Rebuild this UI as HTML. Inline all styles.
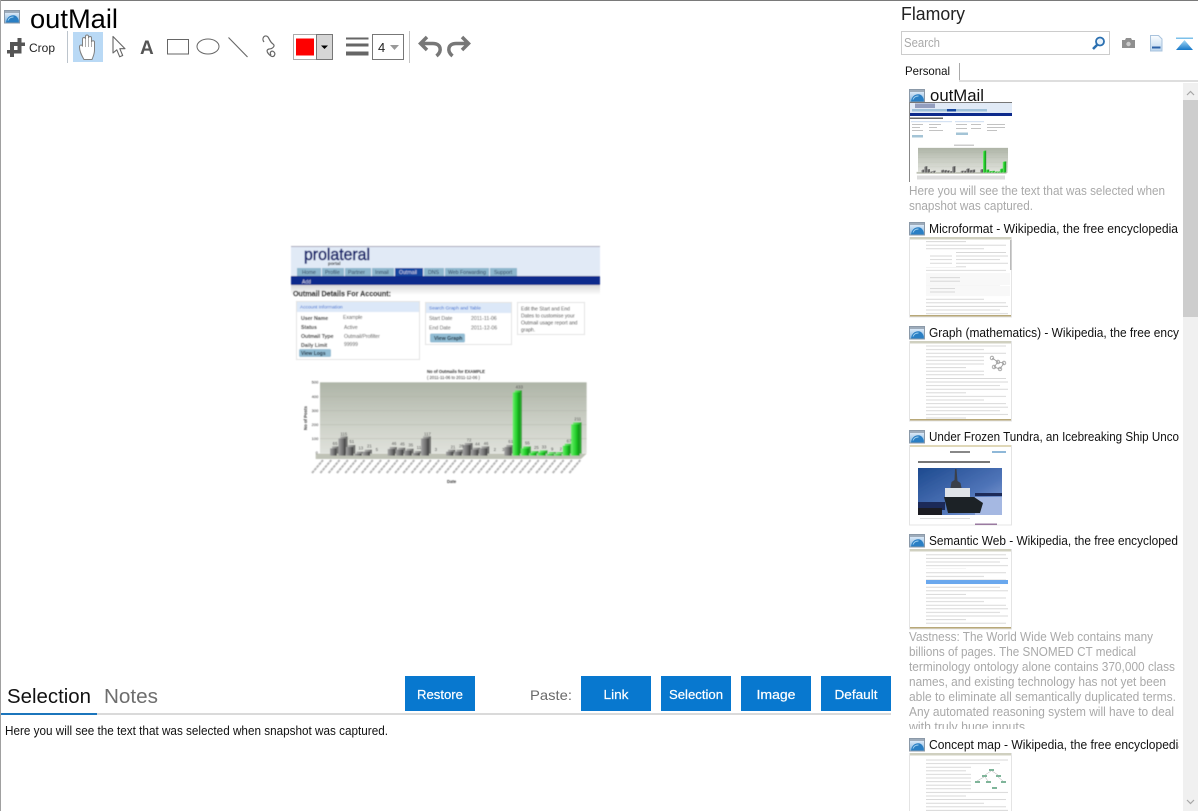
<!DOCTYPE html>
<html><head><meta charset="utf-8"><title>outMail - Flamory</title>
<style>html,body{margin:0;padding:0;background:#fff;width:1198px;height:811px;overflow:hidden}svg{display:block}
text{font-family:"Liberation Sans",sans-serif}</style></head><body>
<svg xmlns="http://www.w3.org/2000/svg" width="1198" height="811" viewBox="0 0 1198 811">
<defs>
<linearGradient id="fav" x1="0" y1="0" x2="0" y2="1"><stop offset="0" stop-color="#dbe9f7"/><stop offset="1" stop-color="#7fb3de"/></linearGradient>
<linearGradient id="plot" x1="0" y1="0" x2="0" y2="1"><stop offset="0" stop-color="#aeb4a7"/><stop offset=".5" stop-color="#c9cdc3"/><stop offset="1" stop-color="#e0e2dc"/></linearGradient>
<linearGradient id="gbar" x1="0" y1="0" x2="1" y2="0"><stop offset="0" stop-color="#a5a5a5"/><stop offset=".6" stop-color="#707070"/><stop offset="1" stop-color="#3c3c3c"/></linearGradient>
<linearGradient id="grn" x1="0" y1="0" x2="1" y2="0"><stop offset="0" stop-color="#6cf06c"/><stop offset=".6" stop-color="#1fcc27"/><stop offset="1" stop-color="#0c8a14"/></linearGradient>
<linearGradient id="shade" x1="0" y1="0" x2="0" y2="1"><stop offset="0" stop-color="#d8d8d8"/><stop offset="1" stop-color="#fff"/></linearGradient>
<linearGradient id="sky" x1="0" y1="0" x2="1" y2="1"><stop offset="0" stop-color="#1d4a8f"/><stop offset=".6" stop-color="#4f74b8"/><stop offset="1" stop-color="#8fa8da"/></linearGradient>
<linearGradient id="pg" x1="0" y1="0" x2="0" y2="1"><stop offset="0" stop-color="#fbfdff"/><stop offset="1" stop-color="#bcd6ee"/></linearGradient>
<linearGradient id="tri" x1="0" y1="0" x2="0" y2="1"><stop offset="0" stop-color="#a8dcf8"/><stop offset="1" stop-color="#1476c8"/></linearGradient>
<filter id="b1" x="-5%" y="-5%" width="110%" height="110%"><feGaussianBlur stdDeviation=".4"/></filter>
<filter id="b2" x="-5%" y="-5%" width="110%" height="110%"><feGaussianBlur stdDeviation=".35"/></filter>
<pattern id="ln" width="84" height="25.2" patternUnits="userSpaceOnUse" patternTransform="translate(926,0)">
<g fill="#cfcfcf"><rect y="0" width="80" height=".8"/><rect y="3.6" width="82" height=".8"/><rect y="7.2" width="74" height=".8"/><rect y="10.800" width="82" height=".8"/><rect y="14.400" width="40" height=".8"/><rect y="18" width="80" height=".8"/><rect y="21.600" width="58" height=".8"/></g>
</pattern>
<clipPath id="cl"><rect x="905" y="84" width="274" height="727"/></clipPath>
<clipPath id="cd"><rect x="905" y="630" width="274" height="99"/></clipPath>
<symbol id="f" viewBox="0 0 16 14" overflow="visible">
<rect x=".5" y=".5" width="15" height="12.500" fill="#e9eff6" stroke="#8b99a8"/>
<rect x="1" y="1" width="14" height="2" fill="#9eacbb"/>
<rect x="1" y="3" width="14" height="9.500" fill="url(#fav)"/>
<path d="M2 12.500C2.500 7.500 6 5 9.500 5.200c3 .2 4.600 2.600 5.300 5.300v2z" fill="#2a7fc4"/>
<path d="M4 10.500c1-2.500 3-3.600 5.500-3.500" fill="none" stroke="#9fd0f0" stroke-width="1"/>
</symbol>
<g id="gb" fill="url(#gbar)">
<rect x="135" y="250" width="20" height="22"/><rect x="160" y="220" width="22" height="52"/><rect x="183" y="246" width="22" height="26"/>
<rect x="208" y="266" width="22" height="6"/><rect x="233" y="260" width="22" height="12"/>
<rect x="308" y="252" width="22" height="20"/><rect x="333" y="254" width="22" height="18"/><rect x="358" y="257" width="22" height="15"/><rect x="383" y="264" width="22" height="8"/><rect x="408" y="220" width="24" height="52"/>
<rect x="483" y="260" width="22" height="12"/><rect x="508" y="260" width="22" height="12"/><rect x="533" y="240" width="24" height="32"/><rect x="558" y="254" width="22" height="18"/><rect x="583" y="250" width="24" height="22"/>
<rect x="658" y="246" width="22" height="26"/>
</g>
<g id="gg" fill="url(#grn)">
<rect x="683" y="82" width="22" height="190"/><rect x="708" y="250" width="24" height="22"/><rect x="733" y="264" width="22" height="8"/><rect x="758" y="262" width="24" height="10"/><rect x="785" y="267" width="22" height="5"/><rect x="808" y="267" width="22" height="5"/><rect x="833" y="242" width="22" height="30"/><rect x="858" y="178" width="26" height="94"/>
</g>
<g id="bars">
<rect x="105" y="52" width="800" height="213" fill="url(#plot)"/>
<path d="M92 266H905L888 282H92Z" fill="#bfc2b6"/>
<path d="M105 95H905M105 137H905M105 179H905M105 221H905" stroke="#a9ae9f" stroke-width="1"/>
<use href="#gb" transform="translate(6,-6)" opacity=".75"/>
<use href="#gg" transform="translate(6,-6)" opacity=".85"/>
<use href="#gb"/><use href="#gg"/>
</g>
</defs>

<rect width="1198" height="811" fill="#fff"/>
<rect x="0" y="0" width="1198" height="1" fill="#7a7a7a"/>
<rect x="0" y="0" width="1" height="811" fill="#a0a0a0"/>

<!-- title -->
<use href="#f" x="4" y="10" width="16" height="14"/>
<text x="30" y="28" font-size="27" fill="#000" textLength="88" lengthAdjust="spacingAndGlyphs">outMail</text>

<!-- toolbar -->
<path d="M17.500 38h4v4.500h3.500v3.500h-3.500v7.500h-7.500v3.500h-4v-3.500H7v-3.500h3V42h7.500zM14 46v4h3.500v-4z" fill="#555" fill-rule="evenodd"/>
<text x="29" y="52" font-size="12" fill="#222" textLength="26" lengthAdjust="spacingAndGlyphs">Crop</text>
<rect x="67" y="31" width="1" height="32" fill="#bcc4cc"/>
<rect x="73" y="32" width="30" height="30" fill="#b9d9f5"/>
<path d="M84 59.500C82 56 79.500 52 79.500 47C79.500 44.500 82 44.500 82.500 46.500V39C82.500 37 85.500 37 85.500 39V36.500C85.500 34.500 88.500 34.500 88.500 36.500V38C88.500 36 91.500 36 91.500 38V42C91.500 40.300 94.500 40.300 94.500 42V50C94.500 54 93 57 92 59.500Z" fill="#fff" stroke="#808080" stroke-width="1"/>
<path d="M85.500 39v8M88.500 38v9M91.500 42v5" stroke="#999" stroke-width=".8" fill="none"/>
<path d="M113 36.500V53l3.800-3.200 2.900 7 3-1.300-2.900-6.800h5.200z" fill="#fff" stroke="#666" stroke-width="1.100" stroke-linejoin="round"/>
<text x="140" y="54" font-size="19" font-weight="700" fill="#555">A</text>
<rect x="167.500" y="39.500" width="21" height="14.500" fill="#fff" stroke="#666"/>
<ellipse cx="208" cy="46.500" rx="11" ry="7.500" fill="#fff" stroke="#666"/>
<path d="M228.500 37.500L247.500 57" stroke="#666" stroke-width="1.100"/>
<path d="M264 42C261 38 265 34 268 37C270 40 270 42 273 44C276 46 272 49 269 49C265 50 268 54 271 56C274 58 276 54 274 52C272 50 269 52 271 55" fill="none" stroke="#666" stroke-width="1.200"/>

<rect x="293.500" y="34.500" width="23" height="25" fill="#fff" stroke="#aaa"/>
<rect x="296" y="38.500" width="18" height="17" fill="#fe0000"/>
<rect x="316.500" y="34.500" width="16" height="25" fill="#d6d6d6" stroke="#777"/>
<path d="M321 45.500h7l-3.500 3.500z" fill="#000"/>
<rect x="346" y="37.500" width="22.500" height="2" fill="#666"/>
<rect x="346" y="43.500" width="22.500" height="3" fill="#666"/>
<rect x="346" y="51.500" width="22.500" height="4" fill="#666"/>
<rect x="372.500" y="34.500" width="31" height="25" fill="#fff" stroke="#777"/>
<text x="378" y="52" font-size="13" fill="#222">4</text>
<path d="M390 45h9l-4.500 5z" fill="#999"/>
<rect x="409" y="31" width="1" height="32" fill="#c4c4c4"/>
<path d="M427 37L420.500 43.500 427 50M421.500 43.500H433C441 43.500 442.500 51 436.500 56" fill="none" stroke="#777" stroke-width="3.500"/>
<path d="M462 37L468.500 43.500 462 50M467.500 43.500H456C448 43.500 446.500 51 452.500 56" fill="none" stroke="#777" stroke-width="3.500"/>

<!-- captured page -->
<g filter="url(#b1)">
<rect x="291" y="246" width="309" height="30" fill="#e1eaf6"/>
<rect x="291" y="246" width="309" height="1" fill="#aab"/>
<text x="304" y="260" font-size="17" fill="#14246e" textLength="66" lengthAdjust="spacingAndGlyphs" stroke="#14246e" stroke-width=".6">prolateral</text>
<text x="328" y="265" font-size="4.500" font-weight="700" fill="#222">portal</text>
<g fill="#8db6cc">
<rect x="297" y="268" width="24" height="8"/><rect x="322" y="268" width="22" height="8"/><rect x="345" y="268" width="26" height="8"/><rect x="372" y="268" width="22" height="8"/><rect x="424" y="268" width="20" height="8"/><rect x="445" y="268" width="44" height="8"/><rect x="490" y="268" width="27" height="8"/>
</g>
<rect x="395" y="268" width="28" height="8" fill="#1846a0"/>
<g font-size="5.200" fill="#1e3350">
<text x="302" y="274">Home</text><text x="325" y="274">Profile</text><text x="348" y="274">Partner</text><text x="375" y="274">Inmail</text><text x="428" y="274">DNS</text><text x="448" y="274">Web Forwarding</text><text x="494" y="274">Support</text>
</g>
<text x="399" y="274" font-size="5.200" fill="#dde">Outmail</text>
<rect x="291" y="276" width="309" height="9" fill="#0a2a8c"/>
<text x="302" y="283.500" font-size="5" fill="#dde">Add</text>
<rect x="291" y="285" width="309" height="10" fill="url(#shade)"/>
<text x="293" y="296" font-size="7.700" font-weight="700" fill="#111" stroke="#111" stroke-width=".2" textLength="98" lengthAdjust="spacingAndGlyphs">Outmail Details For Account:</text>
<rect x="296.500" y="301.500" width="123" height="58" fill="#fff" stroke="#e3e3e3"/>
<rect x="297" y="302" width="122" height="10" fill="#dce8f8"/>
<text x="300" y="308.500" font-size="4.800" fill="#36c">Account Information</text>
<g font-size="5.200" font-weight="700" fill="#111"><text x="301" y="320">User Name</text><text x="301" y="329">Status</text><text x="301" y="338">Outmail Type</text><text x="301" y="347">Daily Limit</text></g>
<g font-size="5" fill="#444"><text x="343" y="319">Example</text><text x="344" y="329">Active</text><text x="344" y="338">Outmail/Profilter</text><text x="344" y="346">99999</text></g>
<rect x="299" y="349" width="32" height="8" rx="1.500" fill="#92bdd4"/>
<text x="301" y="355" font-size="5" font-weight="700" fill="#123">View Logs</text>
<rect x="425.500" y="302.500" width="86" height="42" fill="#fff" stroke="#e3e3e3"/>
<rect x="426" y="303" width="85" height="10" fill="#dce8f8"/>
<text x="429" y="309.500" font-size="4.800" fill="#36c">Search Graph and Table</text>
<g font-size="5.200" fill="#444"><text x="429" y="320">Start Date</text><text x="429" y="329.500">End Date</text><text x="471" y="320">2011-11-06</text><text x="471" y="329.500">2011-12-06</text></g>
<rect x="430" y="333.500" width="35" height="9" rx="1.500" fill="#92bdd4"/>
<text x="434" y="340" font-size="5.200" font-weight="700" fill="#123">View Graph</text>
<rect x="517.500" y="302.500" width="67" height="32" fill="#fff" stroke="#e3e3e3"/>
<g font-size="5" fill="#333"><text x="521" y="310.500">Edit the Start and End</text><text x="521" y="317.500">Dates to customise your</text><text x="521" y="324.500">Outmail usage report and</text><text x="521" y="331.500">graph.</text></g>
<text x="427" y="373" font-size="4.200" font-weight="700" fill="#333">No of Outmails for EXAMPLE</text>
<text x="427" y="379" font-size="4.200" fill="#333">( 2011-11-06 to 2011-12-06 )</text>
<use href="#bars" transform="translate(285,365) scale(.3333)"/>
<g transform="translate(285,365) scale(.3333)" font-size="13" fill="#444">
<text x="143" y="240">65</text><text x="166" y="212">115</text><text x="193" y="234">51</text><text x="220" y="254">13</text><text x="246" y="248">21</text><text x="272" y="258">5</text><text x="320" y="240">46</text><text x="345" y="242">45</text><text x="370" y="245">35</text><text x="395" y="252">11</text><text x="417" y="212">117</text><text x="449" y="258">3</text><text x="497" y="250">21</text><text x="522" y="248">26</text><text x="545" y="230">72</text><text x="570" y="242">44</text><text x="596" y="240">46</text><text x="626" y="258">2</text><text x="651" y="258">3</text><text x="670" y="234">61</text><text x="692" y="70">433</text><text x="720" y="238">55</text><text x="747" y="252">25</text><text x="770" y="250">33</text><text x="798" y="256">9</text><text x="824" y="256">2</text><text x="845" y="232">67</text><text x="868" y="166">211</text>
<g fill="#333" font-size="12"><text x="80" y="56">500</text><text x="80" y="99">400</text><text x="80" y="141">300</text><text x="80" y="183">200</text><text x="80" y="225">100</text><text x="92" y="267">0</text></g>
</g>
<text x="307" y="430" font-size="4.300" font-weight="700" fill="#333" transform="rotate(-90 307 430)">No of Posts</text>
<g stroke="#b5b5b5" stroke-width="2" stroke-dasharray="3 .6" fill="none">
<path d="M312 473l11-13M320.300 473l11-13M328.600 473l11-13M336.900 473l11-13M345.200 473l11-13M353.500 473l11-13M361.800 473l11-13M370.100 473l11-13M378.400 473l11-13M386.700 473l11-13M395 473l11-13M403.300 473l11-13M411.600 473l11-13M419.900 473l11-13M428.200 473l11-13M436.500 473l11-13M444.800 473l11-13M453.100 473l11-13M461.400 473l11-13M469.700 473l11-13M478 473l11-13M486.300 473l11-13M494.600 473l11-13M502.900 473l11-13M511.200 473l11-13M519.500 473l11-13M527.800 473l11-13M536.100 473l11-13M544.400 473l11-13M552.700 473l11-13M561 473l11-13M569.300 473l11-13"/>
</g>
<text x="447" y="483" font-size="4.200" font-weight="700" fill="#333">Date</text>
</g>

<!-- bottom pane -->
<text x="7" y="703" font-size="20" fill="#111" textLength="84" lengthAdjust="spacingAndGlyphs">Selection</text>
<text x="104" y="703" font-size="20" fill="#6e6e6e" textLength="54" lengthAdjust="spacingAndGlyphs">Notes</text>
<rect x="1" y="713" width="890" height="2" fill="#dadada"/>
<rect x="1" y="713" width="96" height="2" fill="#1b75bc"/>
<g fill="#0878cf">
<rect x="405" y="676" width="70" height="35"/><rect x="581" y="676" width="70" height="35"/><rect x="661" y="676" width="70" height="35"/><rect x="741" y="676" width="70" height="35"/><rect x="821" y="676" width="70" height="35"/>
</g>
<text x="530" y="700" font-size="14" fill="#6a6a6a" textLength="42" lengthAdjust="spacingAndGlyphs">Paste:</text>
<g font-size="13" fill="#fff" stroke="#fff" stroke-width=".2" text-anchor="middle">
<text x="440" y="699" textLength="46" lengthAdjust="spacingAndGlyphs">Restore</text>
<text x="616" y="699" textLength="25" lengthAdjust="spacingAndGlyphs">Link</text>
<text x="696" y="699" textLength="54" lengthAdjust="spacingAndGlyphs">Selection</text>
<text x="776" y="699" textLength="39" lengthAdjust="spacingAndGlyphs">Image</text>
<text x="856" y="699" textLength="43" lengthAdjust="spacingAndGlyphs">Default</text>
</g>
<text x="5" y="735" font-size="12.500" fill="#111" textLength="383" lengthAdjust="spacingAndGlyphs">Here you will see the text that was selected when snapshot was captured.</text>

<!-- right panel header -->
<text x="901" y="20" font-size="18" fill="#222" textLength="64" lengthAdjust="spacingAndGlyphs">Flamory</text>
<rect x="901.500" y="31.500" width="208" height="23" fill="#fff" stroke="#ccc"/>
<text x="904" y="47" font-size="12.500" fill="#aaa" textLength="36" lengthAdjust="spacingAndGlyphs">Search</text>
<circle cx="1100" cy="41.500" r="4" fill="#e8f2fb" stroke="#2a6fb0" stroke-width="1.800"/>
<path d="M1097 45L1093 49" stroke="#2a6fb0" stroke-width="2.600"/>
<path d="M1122 40h3l1-2h5l1 2h3v8h-13z" fill="#8f8f8f"/><circle cx="1128.500" cy="44" r="2.200" fill="#ccc"/>
<path d="M1150.500 35.500h8l3.500 3.500v12h-11.500z" fill="url(#pg)" stroke="#a9c3dd"/><rect x="1152" y="46.500" width="8.500" height="2" fill="#2d62a8"/>
<rect x="1176" y="37.500" width="17" height="1.500" fill="#7cc0ea"/>
<path d="M1184.500 40L1176 50h17z" fill="url(#tri)"/>

<rect x="959" y="63" width="1" height="18" fill="#aaa"/>
<text x="905" y="75" font-size="12" fill="#111" textLength="45" lengthAdjust="spacingAndGlyphs">Personal</text>
<rect x="959" y="80" width="239" height="2" fill="#dedede"/>

<!-- scrollbar -->
<rect x="1183" y="83" width="15" height="728" fill="#f0f0f0"/>
<rect x="1183" y="100" width="15" height="217" fill="#cdcdcd"/>
<path d="M1187 95l3.500-3.500 3.500 3.500" fill="none" stroke="#a6a6a6" stroke-width="1.200"/>
<path d="M1187 800l3.500 3.500 3.500-3.500" fill="none" stroke="#a6a6a6" stroke-width="1.200"/>

<!-- list -->
<g clip-path="url(#cl)">
<use href="#f" x="909" y="89" width="16" height="14"/>
<text x="930" y="101" font-size="16.500" fill="#111" textLength="54" lengthAdjust="spacingAndGlyphs">outMail</text>
<!-- thumb 1 -->
<g filter="url(#b2)">
<rect x="909" y="102" width="103" height="80" fill="#fff"/>
<rect x="909" y="102" width="103" height="1" fill="#777"/><rect x="909" y="102" width="1" height="80" fill="#888"/>
<rect x="910" y="103" width="102" height="10" fill="#e1eaf6"/>
<rect x="915" y="103.500" width="20" height="4.500" fill="#7f8bb0" opacity=".8"/>
<rect x="912" y="109" width="75" height="2.500" fill="#9fc0d8"/><rect x="947" y="109" width="9" height="2.500" fill="#1846a0"/>
<rect x="910" y="113" width="102" height="3" fill="#0a2a8c"/>
<rect x="910" y="117.500" width="33" height="1.500" fill="#666"/>
<rect x="911" y="121" width="41" height="1.200" fill="#d5e2f3"/><rect x="955" y="121" width="29" height="1.200" fill="#d5e2f3"/>
<g fill="#bbb"><rect x="912" y="124" width="11" height=".9"/><rect x="912" y="127" width="8" height=".9"/><rect x="912" y="130" width="11" height=".9"/><rect x="929" y="124" width="12" height=".9"/><rect x="929" y="127" width="8" height=".9"/><rect x="929" y="130" width="14" height=".9"/><rect x="956" y="124" width="11" height=".9"/><rect x="971" y="124" width="10" height=".9"/><rect x="956" y="128" width="11" height=".9"/><rect x="971" y="128" width="10" height=".9"/><rect x="987" y="124" width="18" height=".9"/><rect x="987" y="127" width="18" height=".9"/><rect x="987" y="130" width="10" height=".9"/></g>
<rect x="912" y="135" width="11" height="2.500" fill="#a4c4d6"/><rect x="956" y="132.500" width="12" height="2.500" fill="#a4c4d6"/>
<rect x="954" y="144.500" width="20" height="1.500" fill="#ccc"/>
<use href="#bars" transform="translate(906.200,142) scale(.1125)"/>
<rect x="917" y="175.500" width="88" height="4" fill="#ddd"/>
</g>
<g fill="#a9a9a9" font-size="12.500">
<text x="909" y="195" textLength="256" lengthAdjust="spacingAndGlyphs">Here you will see the text that was selected when</text>
<text x="909" y="210" textLength="124" lengthAdjust="spacingAndGlyphs">snapshot was captured.</text>
</g>

<!-- Microformat -->
<use href="#f" x="909" y="222" width="16" height="14"/>
<text x="929" y="233" font-size="12.500" fill="#111" textLength="249" lengthAdjust="spacingAndGlyphs">Microformat - Wikipedia, the free encyclopedia</text>
<g filter="url(#b2)">
<rect x="909.500" y="237.500" width="102" height="79.500" fill="#fff" stroke="#e4e4e4"/>
<rect x="910" y="237" width="101" height="2.500" fill="#d0d0c0"/>
<rect x="926" y="241" width="83" height="75" fill="url(#ln)"/>
<rect x="926" y="251" width="30" height="16" fill="#fff"/><rect x="930" y="253" width="22" height="12" fill="url(#ln)"/>
<rect x="926" y="273" width="84" height="12" fill="#f8f8f8"/><rect x="930" y="276" width="30" height="8" fill="url(#ln)"/>
<rect x="926" y="286" width="84" height="10" fill="#f8f8f8"/><rect x="930" y="288" width="25" height="7" fill="url(#ln)"/>
<rect x="1010" y="240" width="1.500" height="30" fill="#bbb"/>
<rect x="910" y="315" width="101" height="1.500" fill="#b8a878"/>
</g>

<!-- Graph -->
<use href="#f" x="909" y="326" width="16" height="14"/>
<text x="929" y="337" font-size="12.500" fill="#111" textLength="250" lengthAdjust="spacingAndGlyphs">Graph (mathematics) - Wikipedia, the free ency</text>
<g filter="url(#b2)">
<rect x="909.500" y="341.500" width="102" height="79.500" fill="#fff" stroke="#e4e4e4"/>
<rect x="910" y="341" width="101" height="2.500" fill="#d0d0c0"/>
<rect x="926" y="345" width="83" height="75" fill="url(#ln)"/>
<rect x="984" y="355" width="26" height="20" fill="#fff"/>
<g fill="none" stroke="#999" stroke-width=".8"><circle cx="992" cy="358" r="1.800"/><circle cx="998" cy="362" r="1.800"/><circle cx="1004" cy="363" r="1.800"/><circle cx="994" cy="367" r="1.800"/><circle cx="1000" cy="369" r="1.800"/><path d="M992 358l6 4 6 1-4 6-6-2 4-5"/></g>
<rect x="910" y="419" width="101" height="1.500" fill="#b8a878"/>
</g>

<!-- Under Frozen -->
<use href="#f" x="909" y="430" width="16" height="14"/>
<text x="929" y="441" font-size="12.500" fill="#111" textLength="250" lengthAdjust="spacingAndGlyphs">Under Frozen Tundra, an Icebreaking Ship Unco</text>
<g filter="url(#b2)">
<rect x="909.500" y="445.500" width="102" height="79.500" fill="#fff" stroke="#e4e4e4"/>
<rect x="910" y="445" width="101" height="2" fill="#e0d8b8"/>
<rect x="950" y="451" width="20" height="2" fill="#888"/><rect x="992" y="451" width="14" height="2" fill="#8fb8d8"/>
<rect x="918" y="461" width="72" height="2" fill="#777"/>
<rect x="918" y="468" width="84" height="47" fill="url(#sky)"/>
<path d="M975 497h27v18h-27z" fill="#a5b8e2"/>
<path d="M918 502h27v8h-27zM975 493h27v3h-27z" fill="#1c2c58"/>
<path d="M955 469h1.500l1 12 3 2 1 5h-11l1-6 3-2z" fill="#3a3f48"/>
<path d="M945 488h25v9h-25z" fill="#dfe3e8"/>
<path d="M944 497h30l9 6-3 10h-32z" fill="#1c2026"/>
<rect x="918" y="508" width="24" height="7" fill="#1f1f22"/>
<rect x="920" y="518" width="50" height="1" fill="#ddd"/>
<rect x="975" y="523.500" width="22" height="1.500" fill="#9a7aa0"/>
</g>

<!-- Semantic Web -->
<use href="#f" x="909" y="534" width="16" height="14"/>
<text x="929" y="545" font-size="12.500" fill="#111" textLength="249" lengthAdjust="spacingAndGlyphs">Semantic Web - Wikipedia, the free encycloped</text>
<g filter="url(#b2)">
<rect x="909.500" y="549.500" width="102" height="79.500" fill="#fff" stroke="#e4e4e4"/>
<rect x="910" y="549" width="101" height="2.500" fill="#d0d0c0"/>
<rect x="926" y="554" width="83" height="72" fill="url(#ln)"/>
<rect x="926" y="580" width="82" height="4" fill="#6aa8ee"/>
<rect x="926" y="569" width="80" height="3" fill="#fff"/>
<rect x="910" y="627" width="101" height="1.500" fill="#b8a878"/>
</g>
<g fill="#a9a9a9" font-size="12.500" clip-path="url(#cd)">
<text x="909" y="641" textLength="244" lengthAdjust="spacingAndGlyphs">Vastness: The World Wide Web contains many</text>
<text x="909" y="656" textLength="227" lengthAdjust="spacingAndGlyphs">billions of pages. The SNOMED CT medical</text>
<text x="909" y="671" textLength="266" lengthAdjust="spacingAndGlyphs">terminology ontology alone contains 370,000 class</text>
<text x="909" y="686" textLength="257" lengthAdjust="spacingAndGlyphs">names, and existing technology has not yet been</text>
<text x="909" y="701" textLength="267" lengthAdjust="spacingAndGlyphs">able to eliminate all semantically duplicated terms.</text>
<text x="909" y="716" textLength="265" lengthAdjust="spacingAndGlyphs">Any automated reasoning system will have to deal</text>
<text x="909" y="731" textLength="116" lengthAdjust="spacingAndGlyphs">with truly huge inputs</text>
</g>

<!-- Concept map -->
<use href="#f" x="909" y="738" width="16" height="14"/>
<text x="929" y="749" font-size="12.500" fill="#111" textLength="256" lengthAdjust="spacingAndGlyphs">Concept map - Wikipedia, the free encyclopedia</text>
<g filter="url(#b2)">
<rect x="909.500" y="753.500" width="102" height="60" fill="#fff" stroke="#e4e4e4"/>
<rect x="910" y="753" width="101" height="2.500" fill="#d0d0c0"/>
<rect x="926" y="758" width="83" height="53" fill="url(#ln)"/>
<rect x="971" y="766" width="38" height="24" fill="#fff"/>
<g fill="#7fb59a"><rect x="989" y="769" width="5" height="2"/><rect x="982" y="775" width="5" height="2"/><rect x="996" y="775" width="5" height="2"/><rect x="975" y="781" width="5" height="2"/><rect x="986" y="781" width="5" height="2"/><rect x="1001" y="781" width="5" height="2"/><rect x="992" y="787" width="5" height="2"/></g>
<path d="M991 771l-6 4M992 771l6 4M984 777l-7 4M985 777l3 4M998 777l5 4" stroke="#aaa" stroke-width=".5"/>
</g>
</g>
</svg>
</body></html>
